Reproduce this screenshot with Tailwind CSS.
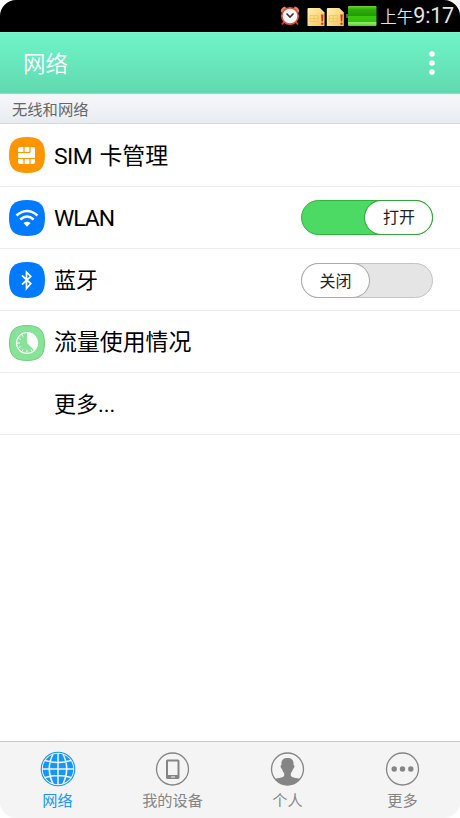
<!DOCTYPE html>
<html lang="zh-CN">
<head>
<meta charset="utf-8">
<title>网络</title>
<script src="https://cdn.jsdelivr.net/npm/@tailwindcss/browser@4"></script>
</head>
<body class="bg-white font-[Roboto,'Noto_Sans_CJK_SC',sans-serif]">
<div class="flex h-[818px] w-[460px] flex-col overflow-hidden rounded-[16px] bg-white">
  <!-- Status bar -->
  <div class="flex h-8 shrink-0 items-center justify-end bg-black pr-[6px] text-[#e4e4e4]">
    <svg class="mr-[6px] h-[22px] w-[22px]" viewBox="0 0 22 22">
      <path d="M2 7Q1 3 6 1.500L8 4L4 8ZM20 7Q21 3 16 1.500L14 4L18 8Z" fill="#e5896c"/>
      <path d="M5 17L3 19.500M17 17L19 19.500" stroke="#c74230" stroke-width="2"/>
      <circle cx="11" cy="11" r="8.200" fill="#f7f7f7" stroke="#e05339" stroke-width="1.700"/>
      <path d="M7.500 8.500L11 12L14.500 8.500" fill="none" stroke="#333" stroke-width="1.600"/>
    </svg>
    <svg class="h-[20px] w-[73px]" viewBox="0 0 73 20">
      <defs>
        <linearGradient id="sim" x2="1" y2="1"><stop stop-color="#fff0b0"/><stop offset="1" stop-color="#f7c555"/></linearGradient>
        <linearGradient id="bat" x2="0" y2="1"><stop stop-color="#65d535"/><stop offset=".18" stop-color="#2dad0b"/><stop offset=".48" stop-color="#249b05"/><stop offset=".5" stop-color="#39cb0d"/><stop offset=".78" stop-color="#36bd13"/><stop offset=".83" stop-color="#91f069"/><stop offset="1" stop-color="#5bc73b"/></linearGradient>
      </defs>
      <g id="card">
        <path d="M.5 3Q.5 2 1.500 2H13L17.500 6.500V20H.5Z" fill="url(#sim)"/>
        <path d="M3 9.500H11V15.500H3ZM3 12.500H11M7 9.500V15.500" fill="none" stroke="#f0bd58" stroke-width=".7"/>
        <path d="M14 8.500H16.500L16 15.500H14.500Z" fill="#d6342a"/><circle cx="15.200" cy="17.800" r="1.200" fill="#d6342a"/>
      </g>
      <use href="#card" x="19.300"/>
      <path d="M39 8H42V12H39Z" fill="#555"/>
      <rect x="41" y="0" width="28.500" height="20" rx="1" fill="url(#bat)"/>
    </svg>
    <span class="pt-[3px] text-[16.500px] leading-[24px] font-[350]">上午</span><span class="text-[21.500px] leading-8 tracking-[-0.200px]">9:17</span>
  </div>

  <!-- Title bar -->
  <header class="flex h-[61px] shrink-0 items-center justify-between border-t border-[#83f6d0] bg-linear-to-b from-[#6ff4c8] to-[#61d9b0] pr-[25px] pl-[23px]">
    <h1 class="pt-px text-[22.500px] leading-8 font-[350] text-white">网络</h1>
    <svg class="h-6 w-[6px]" viewBox="0 0 6 24" fill="#fff"><circle cx="3" cy="3" r="2.800"/><circle cx="3" cy="12" r="2.800"/><circle cx="3" cy="21" r="2.800"/></svg>
  </header>
  <div class="h-[31px] shrink-0 border-t border-b border-t-[#b7c8c5] border-b-[#d6d7da] bg-linear-to-b from-[#f6f7fb] to-[#e8ecf1] pl-3 text-[15.300px] leading-[32px] text-[#666]">无线和网络</div>

  <!-- Settings -->
  <main class="flex-1 text-[22.900px] text-black">
    <div class="flex h-[63px] items-center border-b border-[#ededed] pl-[9px]">
      <svg class="h-9 w-9" viewBox="0 0 36 36">
        <path d="M18 0C31 0 36 5 36 18S31 36 18 36S0 31 0 18S5 0 18 0Z" fill="#ff9500"/>
        <rect x="9" y="10" width="17" height="17" rx="2" fill="#fff"/>
        <path d="M15 10V15.500M21 10V15.500M9 15.500H21M9 21.500H26M15 21.500V27M21 21.500V27" stroke="#ff9500" stroke-width="1.200"/>
      </svg>
      <span class="ml-[9px] pt-1"><span class="mr-[2px] tracking-[-0.500px]">SIM </span>卡管理</span>
    </div>
    <div class="flex h-[62px] items-center border-b border-[#ededed] pr-[27px] pl-[9px]">
      <svg class="h-9 w-9" viewBox="0 0 36 36">
        <path d="M18 0C31 0 36 5 36 18S31 36 18 36S0 31 0 18S5 0 18 0Z" fill="#007aff"/>
        <path d="M7.500 15.500Q18 6.500 28.500 15.500M11.300 19.500Q18 13.500 24.700 19.500" fill="none" stroke="#fff" stroke-width="2.500"/>
        <path d="M14.500 23Q18 20.300 21.500 23L18 26.800Z" fill="#fff"/>
      </svg>
      <span class="ml-[9px] pt-1 tracking-[-1px]">WLAN</span>
      <div class="ml-auto flex h-[35px] w-[132px] justify-end rounded-full border-[1.500px] border-[#2fb43b] bg-[#4cd964]">
        <span class="h-[33px] w-[67px] rounded-full bg-white pl-px text-center text-[16px] leading-[34px] text-[#222] shadow-[0_0_0_1px_#36a33c]">打开</span>
      </div>
    </div>
    <div class="flex h-[62px] items-center border-b border-[#ededed] pr-[27px] pl-[9px]">
      <svg class="h-9 w-9" viewBox="0 0 36 36">
        <path d="M18 0C31 0 36 5 36 18S31 36 18 36S0 31 0 18S5 0 18 0Z" fill="#007aff"/>
        <path d="M13 13.500L21.800 21.500L17.500 26.500V10L21.800 14.500L13 22.500" fill="none" stroke="#fff" stroke-width="1.700"/>
      </svg>
      <span class="ml-[9px] pt-[2px] text-[22px]">蓝牙</span>
      <div class="mt-px ml-auto flex h-[35px] w-[132px] rounded-full border border-[#c4c4c4] bg-[#e5e5e5]">
        <span class="h-[33px] w-[67px] rounded-full bg-white text-center text-[16px] leading-[35px] text-[#222] shadow-[0_0_0_1px_#aaa]">关闭</span>
      </div>
    </div>
    <div class="flex h-[62px] items-center border-b border-[#ededed] pl-[9px]">
      <svg class="mt-[2px] h-9 w-9" viewBox="0 0 36 36">
        <path d="M18 .5C30.500 .5 35.500 5.500 35.500 18S30.500 35.500 18 35.500S.5 30.500 .5 18S5.500 .5 18 .5Z" fill="#87e397" stroke="#70cd7f"/>
        <circle cx="18" cy="18" r="10.500" fill="none" stroke="#fff" stroke-width="1.100"/>
        <path d="M18 18V7.500A10.500 10.500 0 0 1 25.500 25.500Z" fill="#fff"/>
        <path d="M18 28V25M12.800 26.800L14.200 24.200M8 18H11M9.200 23L11.700 21.600M9.200 13L11.700 14.400M12.800 9.200L14.200 11.800M23 26.600L21.700 24.200" stroke="#fff" stroke-width="1"/>
      </svg>
      <span class="ml-[9px] pt-1">流量使用情况</span>
    </div>
    <div class="flex h-[62px] items-center border-b border-[#ededed] pt-[2px] pl-[54px] text-[22px]">更多...</div>
  </main>

  <!-- Tabs -->
  <nav class="grid h-[77px] shrink-0 grid-cols-4 border-t border-[#c9cbca] bg-[#f4f4f4] text-[15.200px] leading-5 text-[#858585]">
    <div class="flex flex-col items-center pt-[9px] text-[#1496fa]">
      <svg class="h-9 w-9" viewBox="0 0 36 36">
        <circle cx="18" cy="18" r="16.800" fill="none" stroke="currentColor" stroke-width="1.100"/>
        <circle cx="18" cy="18" r="15.300" fill="currentColor"/>
        <path d="M18 2V34M2 18H34M5 9.500Q18 13.500 31 9.500M5 26.500Q18 22.500 31 26.500M13 3Q5.500 18 13 33M23 3Q30.500 18 23 33" fill="none" stroke="#f4f4f4" stroke-width="1.500"/>
      </svg>
      <span class="mt-[4px]">网络</span>
    </div>
    <div class="flex flex-col items-center pt-[9px]">
      <svg class="h-9 w-9" viewBox="0 0 36 36">
        <circle cx="17.500" cy="18" r="16" fill="none" stroke="currentColor" stroke-width="1.300"/>
        <rect x="11" y="8.500" width="13.500" height="19.500" rx="1.500" fill="currentColor"/>
        <path d="M13 10.500H22.500V24H13Z" fill="#f4f4f4"/><path d="M16 26H20" stroke="#f4f4f4"/>
      </svg>
      <span class="mt-[4px]">我的设备</span>
    </div>
    <div class="flex flex-col items-center pt-[9px]">
      <svg class="h-9 w-9" viewBox="0 0 36 36">
        <circle cx="17.500" cy="18" r="16" fill="none" stroke="currentColor" stroke-width="1.300"/>
        <path transform="translate(-.5)" d="M18 7C22.500 7 24.500 9.500 24 14C25.500 14 25 17.500 23.500 18C23 20 22 21.500 21.300 22.300V24.500C22 27 27 26.500 30.500 28Q25 34 18 34T5.500 28C9 26.500 14 27 14.700 24.500V22.300C14 21.500 13 20 12.500 18C11 17.500 10.500 14 12 14C11.500 9.500 13.500 7 18 7Z" fill="currentColor"/>
      </svg>
      <span class="mt-[4px]">个人</span>
    </div>
    <div class="flex flex-col items-center pt-[9px]">
      <svg class="h-9 w-9" viewBox="0 0 36 36">
        <circle cx="17.500" cy="18" r="16" fill="none" stroke="currentColor" stroke-width="1.300"/>
        <g fill="currentColor"><circle cx="9.200" cy="18" r="2.700"/><circle cx="17.500" cy="18" r="2.700"/><circle cx="25.800" cy="18" r="2.700"/></g>
      </svg>
      <span class="mt-[4px]">更多</span>
    </div>
  </nav>
</div>
</body>
</html>
